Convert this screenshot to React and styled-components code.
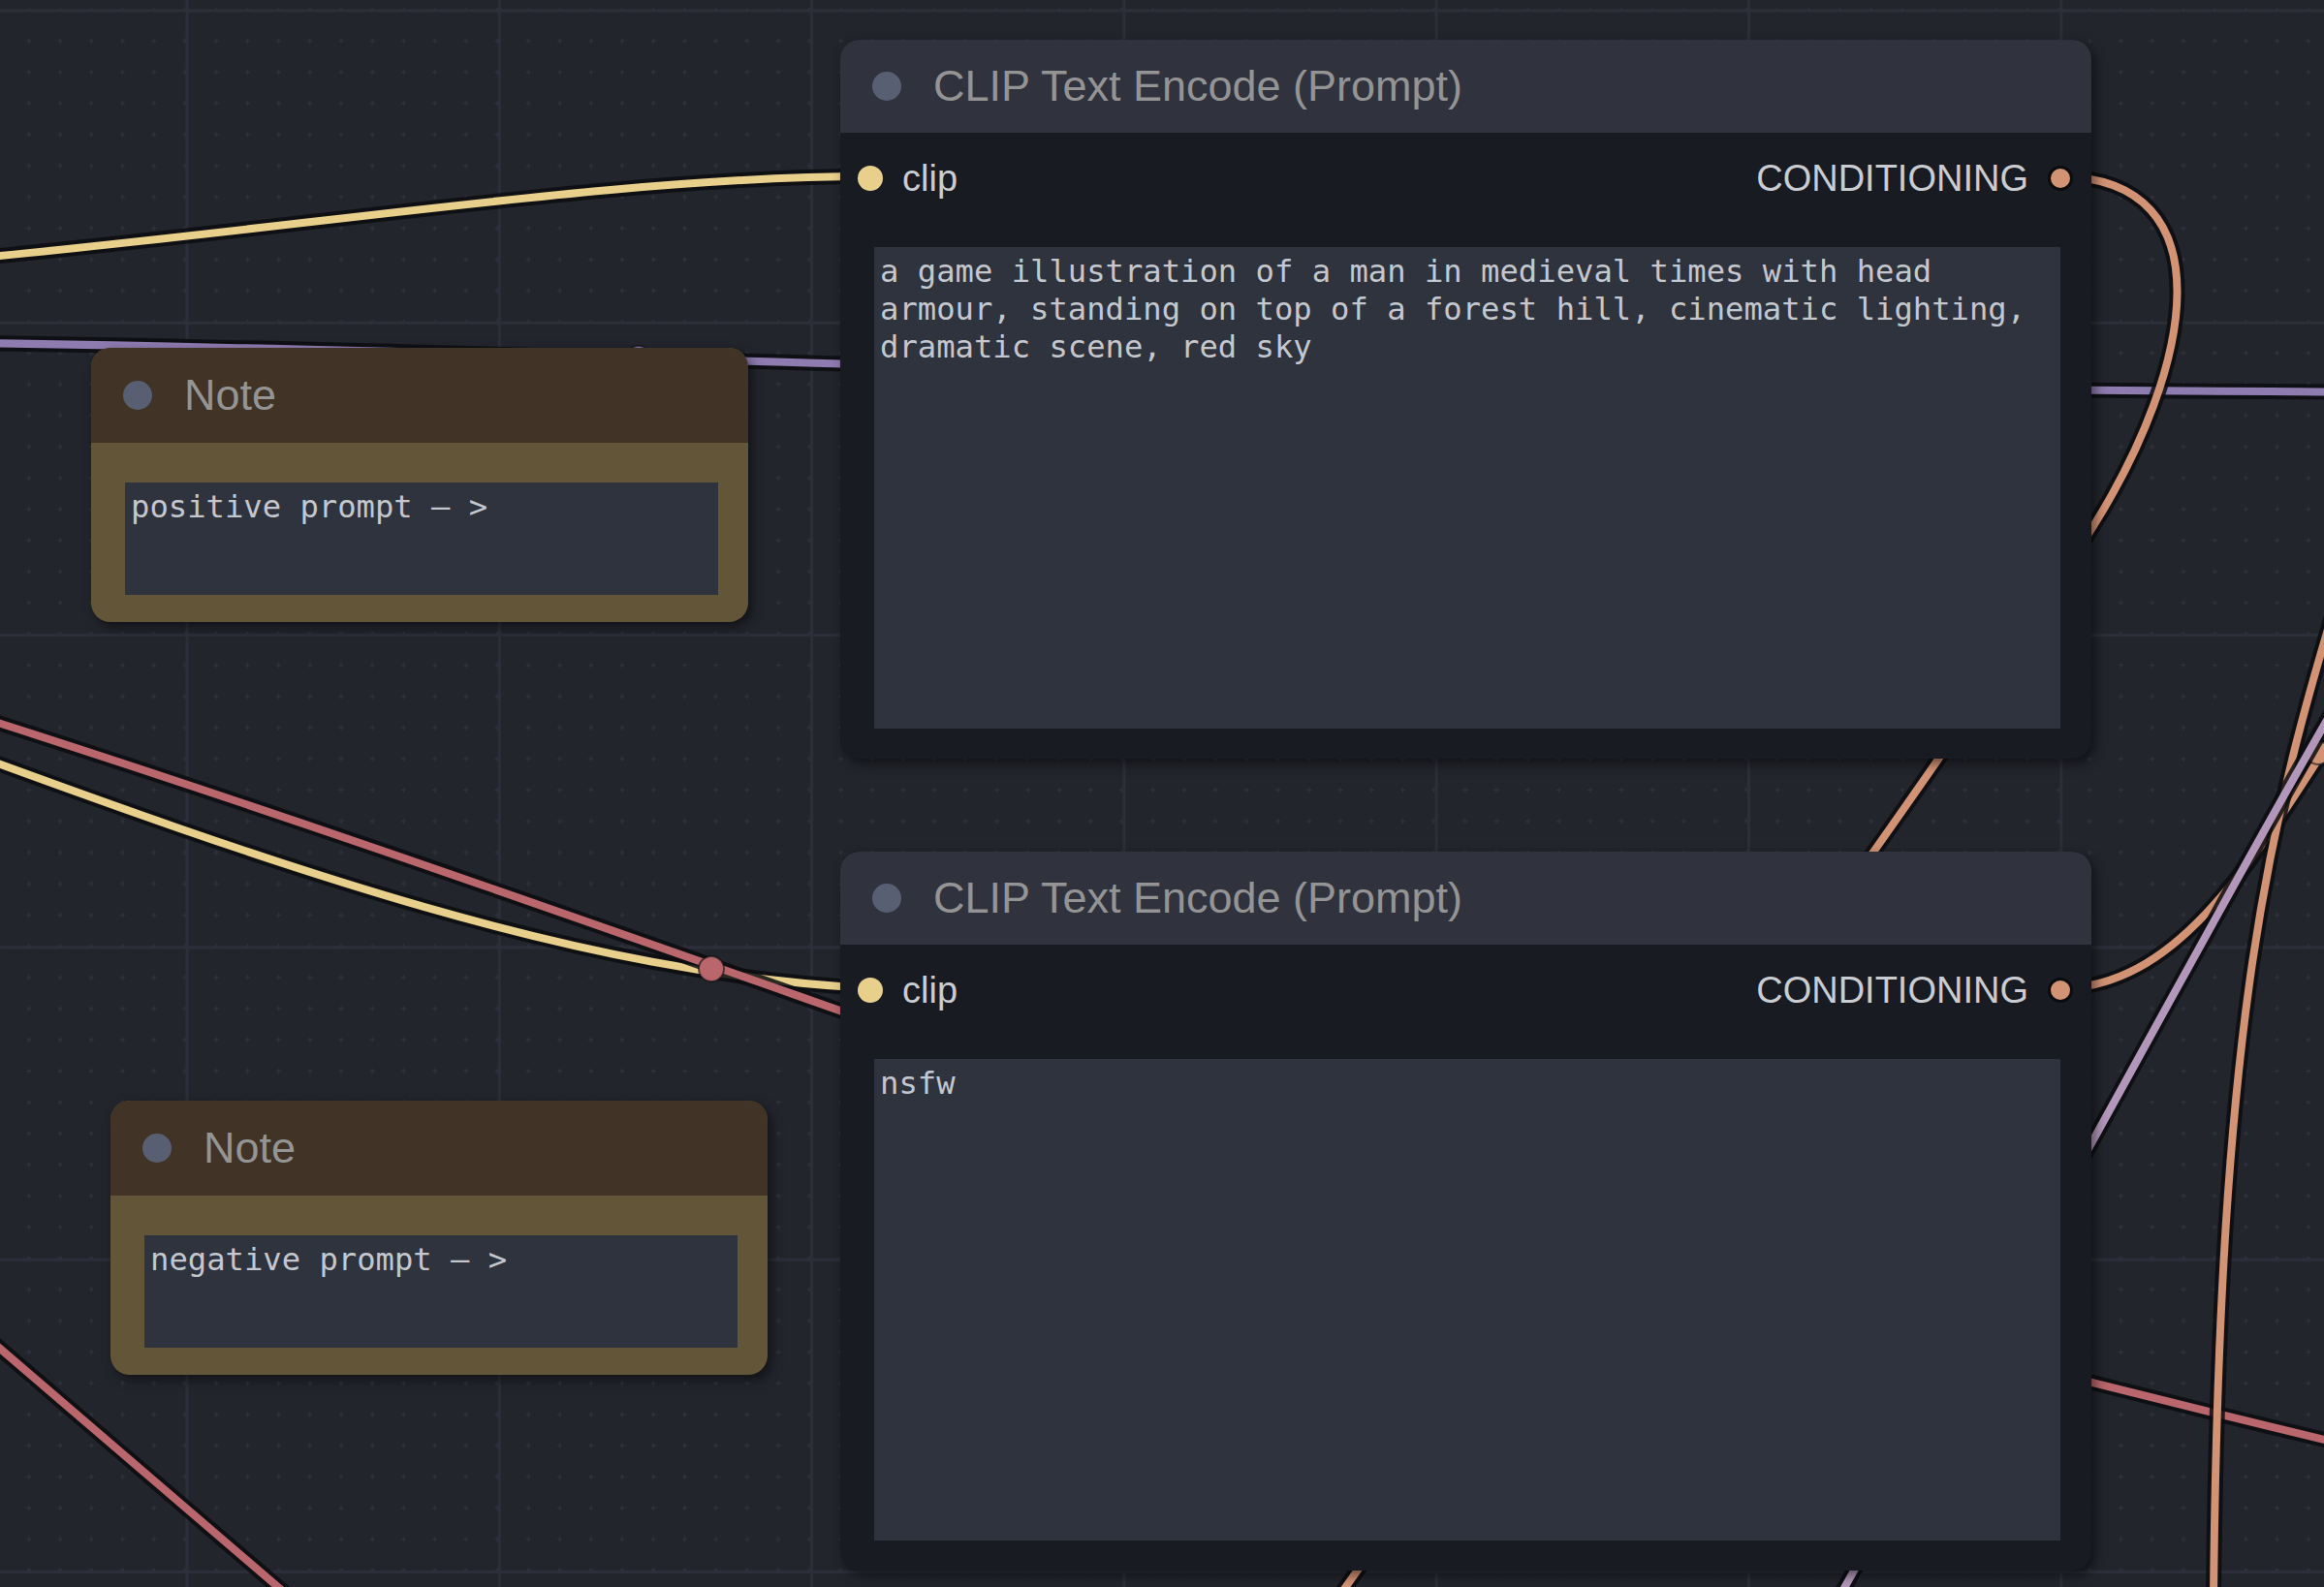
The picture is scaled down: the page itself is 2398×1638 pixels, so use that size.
import React from 'react';
import styled, { createGlobalStyle } from 'styled-components';

const GlobalStyle = createGlobalStyle`
html, body {
    margin: 0;
    padding: 0;
    background: #22252c;
    overflow: hidden;
}
`;

// graph canvas: big grid every 322px, small "+" marks every 32px
const Canvas = styled.div`
position: relative;
width: 2398px;
height: 1638px;
overflow: hidden;
background-color: #22252c;
background-image:
    linear-gradient(to right, #2c2f39 3px, transparent 3px),
    linear-gradient(to bottom, #2c2f39 3px, transparent 3px),
    radial-gradient(3.2px 1.2px at 50% 50%, #2e313b 70%, transparent 100%),
    radial-gradient(1.2px 3.2px at 50% 50%, #2e313b 70%, transparent 100%);
background-size: 322.3px 322.3px, 322.3px 322.3px, 32.23px 32.23px, 32.23px 32.23px;
background-position: 191.5px 0, 0 9.5px, 13.75px -6.1px, 13.75px -6.1px;
font-family: "Liberation Sans", Arial, sans-serif;
`;

const WireLayer = styled.svg`
position: absolute;
left: 0;
top: 0;
width: 2398px;
height: 1638px;
`;

const Node = styled.div`
position: absolute;
left: ${p => p.$x}px;
top: ${p => p.$y}px;
width: ${p => p.$w}px;
display: flex;
flex-direction: column;
border-radius: 20px;
overflow: hidden;
background: ${p => p.$body};
box-shadow: 4px 5px 12px rgba(0, 0, 0, 0.5);
`;

const TitleBar = styled.div`
height: ${p => p.$h}px;
display: flex;
align-items: center;
gap: 33px;
padding-left: 33px;
background: ${p => p.$bg};
flex-shrink: 0;
`;

const TitleDot = styled.span`
width: 30px;
height: 30px;
border-radius: 50%;
background: #585f73;
flex-shrink: 0;
`;

const TitleText = styled.span`
font-size: 45px;
color: #949494;
white-space: nowrap;
`;

const SlotRow = styled.div`
height: 94px;
display: flex;
align-items: center;
justify-content: space-between;
padding: 0 19px 0 18px;
`;

const Slot = styled.div`
display: flex;
align-items: center;
gap: 20px;
`;

const SlotDot = styled.span`
box-sizing: border-box;
width: 26px;
height: 26px;
border-radius: 50%;
background: ${p => p.$color};
border: ${p => (p.$ring ? '3px solid #0b0c10' : 'none')};
`;

const SlotLabel = styled.span`
font-size: 38px;
color: #c9ccd1;
`;

const PromptBox = styled.textarea`
display: block;
box-sizing: border-box;
width: auto;
height: ${p => p.$h}px;
margin: ${p => p.$margin};
padding: 6px;
border: none;
outline: none;
resize: none;
overflow: hidden;
background: #2f333e;
color: #c4c7cd;
font-family: "DejaVu Sans Mono", "Liberation Mono", monospace;
font-size: 32.2px;
line-height: 39px;
`;

const NoteBody = styled.div`
display: flex;
flex-direction: column;
padding: 41px 31px 28px 35px;
`;

const Wire = ({ d, color }) => (
    <g>
        <path d={d} fill="none" stroke="#0c0d11" strokeOpacity="0.85" strokeWidth="16" />
        <path d={d} fill="none" stroke={color} strokeWidth="8" />
    </g>
);

const Marker = ({ x, y, r, color }) => (
    <circle cx={x} cy={y} r={r} fill={color} stroke="#0c0d11" strokeOpacity="0.6" strokeWidth="2" />
);

const YELLOW = '#e8cf8c';
const RED = '#b9666d';
const SALMON = '#d29274';
const PURPLE = '#8e7bb0';
const LAVENDER = '#b397ba';

const ClipNode = ({ x, y, text }) => (
    <Node $x={x} $y={y} $w={1291} $body="#181b21">
        <TitleBar $h={96} $bg="#30333e">
            <TitleDot />
            <TitleText>CLIP Text Encode (Prompt)</TitleText>
        </TitleBar>
        <SlotRow>
            <Slot>
                <SlotDot $color={YELLOW} />
                <SlotLabel>clip</SlotLabel>
            </Slot>
            <Slot>
                <SlotLabel>CONDITIONING</SlotLabel>
                <SlotDot $color={SALMON} $ring />
            </Slot>
        </SlotRow>
        <PromptBox $h={497} $margin="24px 32px 31px 35px" readOnly value={text} />
    </Node>
);

const NoteNode = ({ x, y, text }) => (
    <Node $x={x} $y={y} $w={678} $body="#635638">
        <TitleBar $h={98} $bg="#413325">
            <TitleDot />
            <TitleText>Note</TitleText>
        </TitleBar>
        <NoteBody>
            <PromptBox $h={116} $margin="0" readOnly value={text} />
        </NoteBody>
    </Node>
);

export default function App() {
    return (
        <>
            <GlobalStyle />
            <Canvas>
                <WireLayer viewBox="0 0 2398 1638">
                    <Wire color={YELLOW} d="M -10 265 C 350 230, 650 182, 898 182" />
                    <Wire color={PURPLE} d="M -400 350 C 600 355, 1300 404, 2600 405" />
                    <Marker x={659} y={369} r={12} color={PURPLE} />
                    <Wire color={YELLOW} d="M -100 752 C 300 900, 600 1005, 898 1020" />
                    <Wire color={RED} d="M -100 715 C 300 840, 700 985, 1000 1090 C 1300 1195, 1900 1370, 2500 1510" />
                    <Marker x={734} y={1000} r={13} color={RED} />
                    <Wire color={RED} d="M -50 1349 L 330 1675" />
                    <Wire color={SALMON} d="M 2126 182 C 2300 185, 2262 380, 2160 543 C 2000 800, 1700 1200, 1380 1650" />
                    <Wire color={SALMON} d="M 2126 1020 C 2250 1020, 2330 880, 2420 740" />
                    <Marker x={2392} y={777} r={12} color={SALMON} />
                    <Wire color={SALMON} d="M 2420 590 C 2340 850, 2290 1050, 2284 1650" />
                    <Wire color={LAVENDER} d="M 2450 660 C 2330 860, 2200 1110, 1880 1680" />
                </WireLayer>

                <NoteNode x={94} y={359} text="positive prompt – >" />
                <NoteNode x={114} y={1136} text="negative prompt – >" />

                <ClipNode
                    x={867}
                    y={41}
                    text="a game illustration of a man in medieval times with head armour, standing on top of a forest hill, cinematic lighting, dramatic scene, red sky"
                />
                <ClipNode x={867} y={879} text="nsfw" />
            </Canvas>
        </>
    );
}
